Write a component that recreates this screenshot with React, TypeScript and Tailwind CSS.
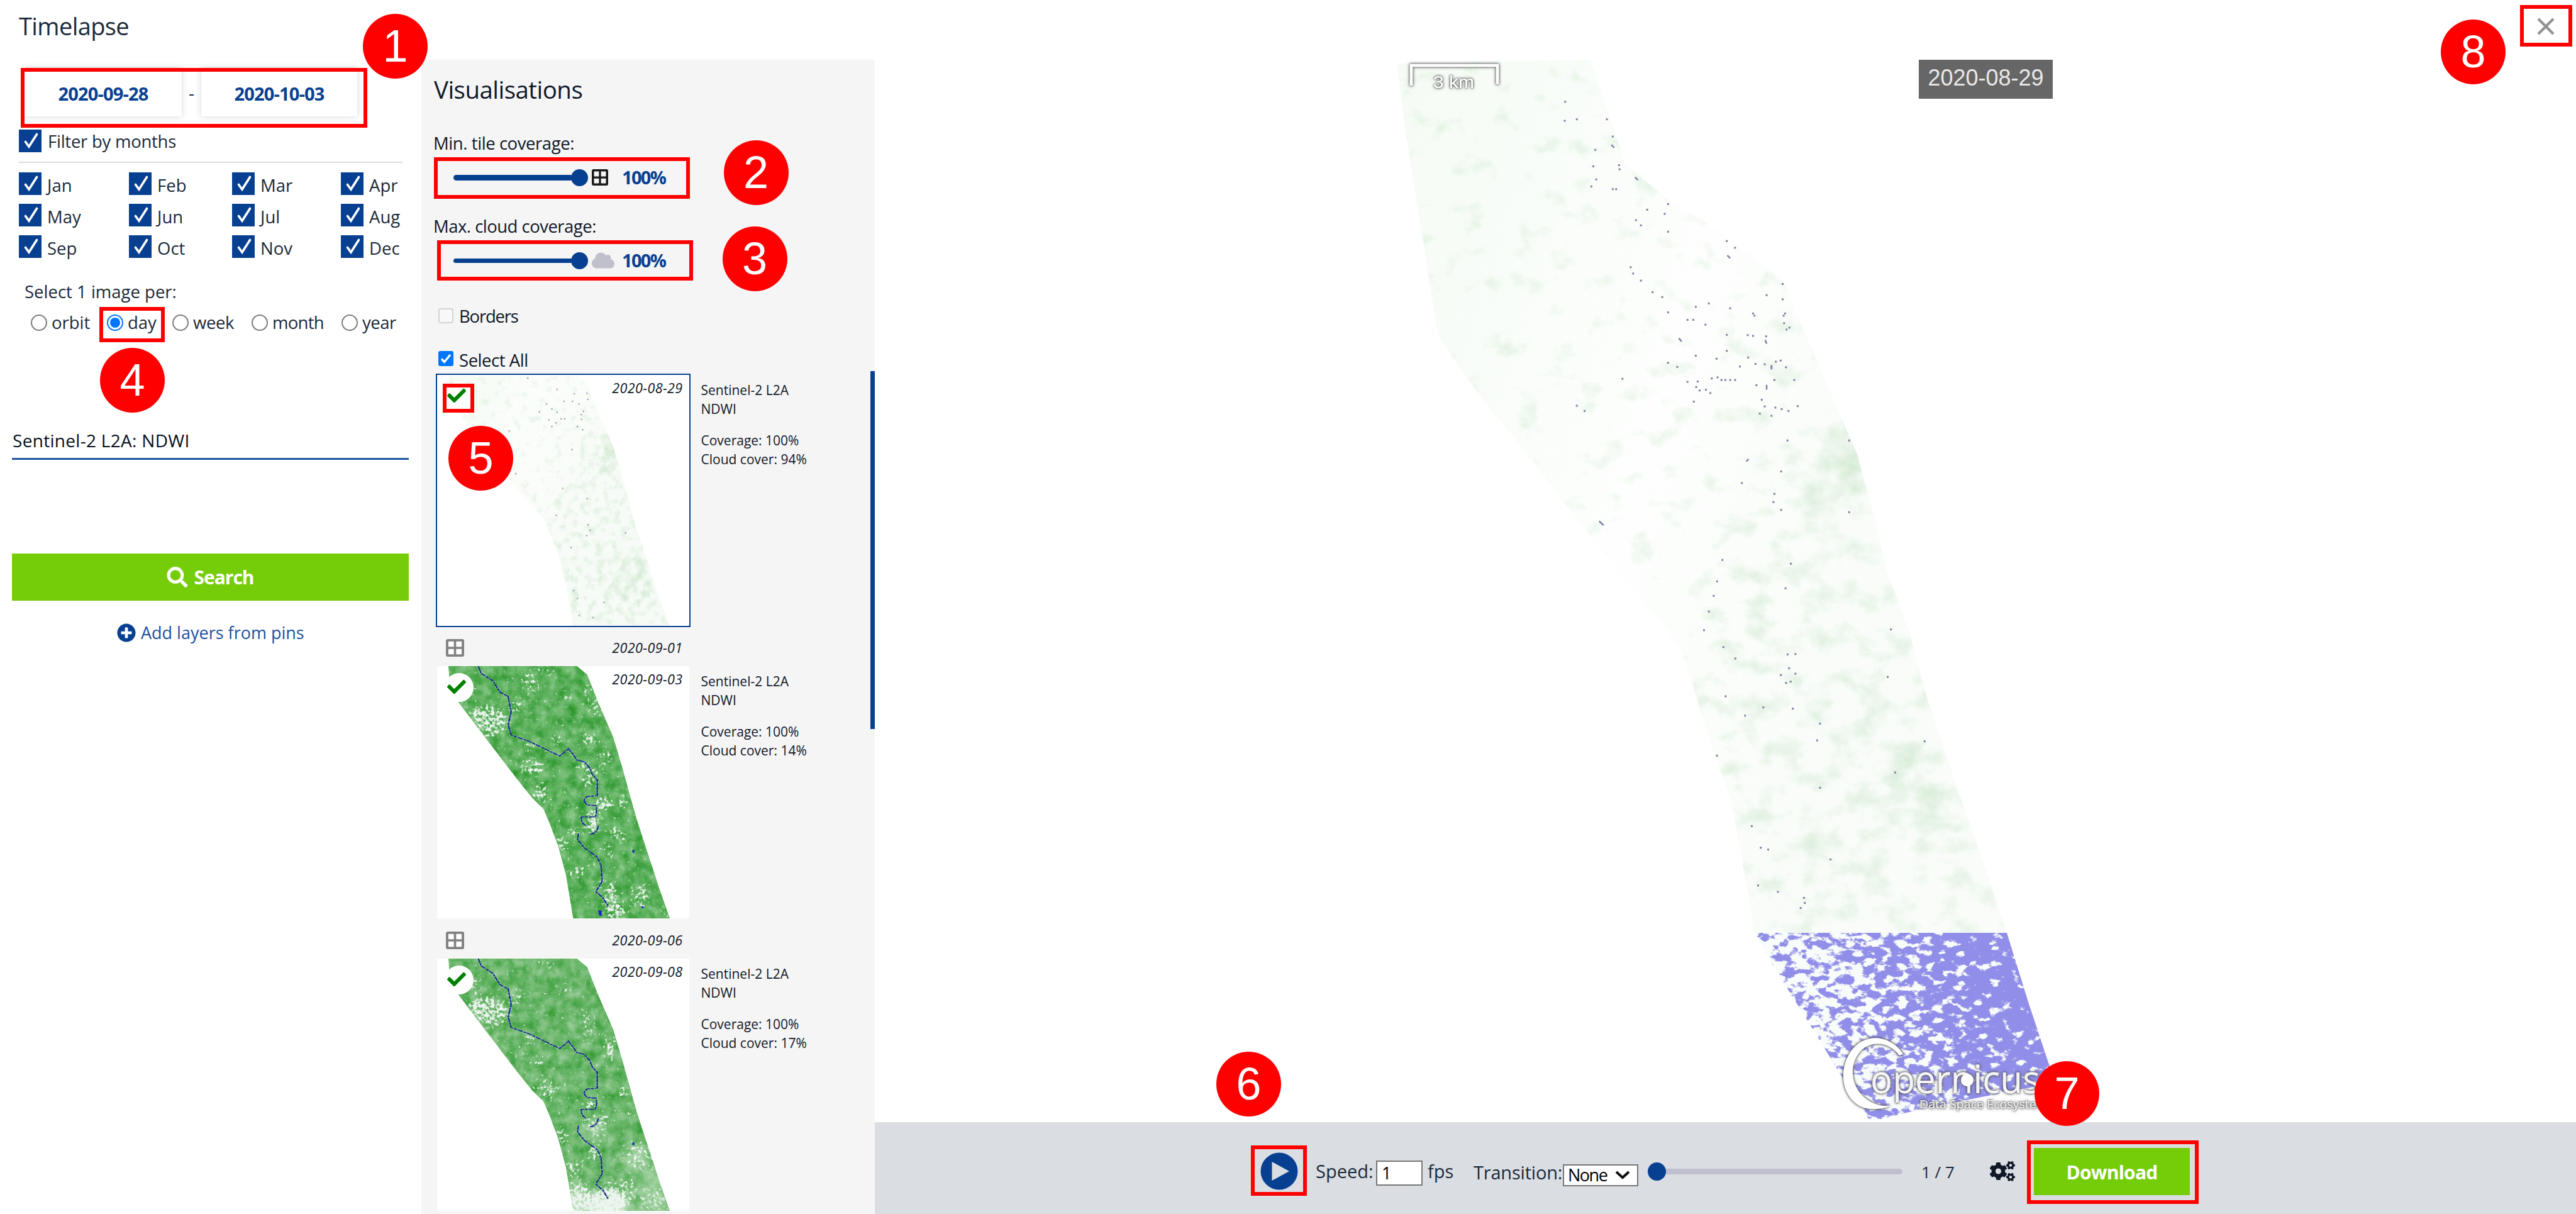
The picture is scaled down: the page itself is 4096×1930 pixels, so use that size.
import React from "react";
import { FaSearch, FaPlusCircle, FaCloud, FaCogs, FaCheck } from "react-icons/fa";

const MONTHS = ["Jan", "Feb", "Mar", "Apr", "May", "Jun", "Jul", "Aug", "Sep", "Oct", "Nov", "Dec"];

/* ---------- annotations ---------- */

function Marker({ n, className }: { n: number; className: string }) {
  return (
    <div
      className={`absolute z-20 flex h-[103px] w-[103px] items-center justify-center rounded-full bg-[#ff0000] font-['Liberation_Sans',sans-serif] text-[72px] leading-[103px] text-white ${className}`}
    >
      {n}
    </div>
  );
}

function Frame({ className }: { className: string }) {
  return <div className={`absolute z-10 border-[6.5px] border-[#ff0000] ${className}`} />;
}

/* ---------- small controls ---------- */

function BlueCheck() {
  return (
    <span className="flex h-9 w-9 shrink-0 items-center justify-center bg-[#084091]">
      <svg viewBox="0 0 36 36" className="h-9 w-9">
        <path d="M10.500 19.500 16 27 28.500 7.500" fill="none" stroke="#fff" strokeWidth="3.600" strokeLinecap="round" />
      </svg>
    </span>
  );
}

function Radio({ label, checked, className }: { label: string; checked?: boolean; className: string }) {
  return (
    <label className={`flex items-center gap-[7px] ${className}`}>
      <span
        className={`flex h-[26px] w-[26px] shrink-0 items-center justify-center rounded-full border-[2px] bg-white ${
          checked ? "border-[#0075ff]" : "border-[#7d7d7d]"
        }`}
      >
        {checked && <span className="h-4 w-4 rounded-full bg-[#0075ff]" />}
      </span>
      {label}
    </label>
  );
}

function TileIcon({ color, className, fill }: { color: string; className: string; fill: string }) {
  return (
    <svg viewBox="0 0 28 28" preserveAspectRatio="none" className={className}>
      <rect x="1.900" y="1.900" width="24.200" height="24.200" rx="1" fill={fill} stroke={color} strokeWidth="3.800" />
      <path d="M14 2v24M2 14h24" stroke={color} strokeWidth="3.500" />
    </svg>
  );
}

function Coverage({ thick, children }: { thick?: boolean; children: React.ReactNode }) {
  return (
    <div className="ml-[30px] flex h-10 items-center">
      <div className="flex w-[214px] items-center">
        <span className={`w-[190px] rounded-full bg-[#084091] ${thick ? "h-[9px]" : "h-[7px]"}`} />
        <span className="-ml-[3px] h-[27px] w-[27px] rounded-full bg-[#084091]" />
      </div>
      <div className="ml-[6px] w-[48px]">{children}</div>
      <span className="text-[29px] font-bold leading-10 tracking-[-1.700px] text-[#084091]">100%</span>
    </div>
  );
}

/* ---------- satellite imagery ---------- */

const STRIP =
  "92,160 535,160 570,200 610,340 660,500 690,640 740,890 780,1060 820,1230 855,1368 522,1368 497,1160 470,1020 440,910 420,845 380,790 325,695 240,540 125,330 97,250";
const RIVER =
  "M195 160 205 195 245 230 270 285 298 305 308 380 298 440 308 490 370 520 430 560 475 590 490 575 505 555 520 580 535 610 560 618 580 650 588 680 605 705 605 780 570 785Q550 800 570 825L600 828Q606 850 598 882L550 882Q548 915 570 925M608 925Q606 962 580 965M540 960 537 990 560 1030 605 1075 618 1115 622 1190 600 1240 625 1270 642 1310";

type Patch = [number, number, number, number, number];

const CLEAR_PATCHES: Patch[] = [
  [235, 425, 62, 72, 0.62], [190, 385, 30, 30, 0.5], [580, 690, 20, 60, 0.6], [628, 820, 28, 34, 0.75], [592, 905, 20, 60, 0.85],
  [690, 815, 18, 40, 0.5], [665, 955, 22, 30, 0.6], [692, 985, 14, 20, 0.65], [640, 1040, 14, 24, 0.6], [410, 770, 26, 44, 0.62],
  [370, 640, 30, 40, 0.5], [405, 650, 20, 34, 0.5], [575, 512, 20, 38, 0.65], [600, 365, 18, 44, 0.6], [655, 1290, 34, 70, 0.58],
  [755, 1260, 30, 60, 0.52], [480, 1010, 22, 36, 0.6], [430, 178, 24, 26, 0.5], [330, 350, 20, 44, 0.5], [528, 955, 18, 20, 0.75],
  [375, 235, 32, 60, 0.45], [472, 510, 18, 44, 0.5], [535, 1150, 24, 34, 0.5], [590, 1100, 14, 18, 0.65], [655, 1210, 18, 20, 0.65],
  [610, 1195, 12, 24, 0.6], [500, 318, 16, 22, 0.5], [550, 630, 20, 22, 0.55], [648, 1078, 10, 14, 0.7], [630, 600, 20, 60, 0.42],
  [575, 280, 16, 50, 0.42], [680, 1350, 40, 34, 0.5], [840, 1340, 14, 40, 0.5], [375, 545, 22, 16, 0.5],
];

const HAZY_PATCHES: Patch[] = [
  [235, 415, 68, 70, 0.62], [190, 385, 34, 34, 0.5], [650, 590, 24, 60, 0.55], [570, 480, 18, 90, 0.42], [692, 800, 16, 26, 0.62],
  [708, 915, 12, 18, 0.65], [630, 920, 14, 24, 0.6], [582, 860, 16, 30, 0.75], [410, 660, 22, 18, 0.55], [348, 610, 12, 34, 0.5],
  [375, 545, 24, 14, 0.6], [430, 178, 24, 26, 0.5], [330, 350, 16, 50, 0.5], [600, 960, 36, 60, 0.46], [600, 1090, 22, 44, 0.66],
  [540, 1310, 40, 80, 0.7], [640, 1330, 70, 70, 0.85], [750, 1110, 60, 70, 0.4], [690, 1270, 60, 60, 0.4], [800, 1330, 50, 80, 0.4],
  [430, 780, 40, 50, 0.42], [480, 1010, 24, 40, 0.5], [520, 1170, 30, 40, 0.48], [490, 318, 14, 22, 0.5], [190, 290, 14, 60, 0.42],
];

function GreenScene({ id, patches, hazy }: { id: string; patches: Patch[]; hazy?: boolean }) {
  return (
    <svg viewBox="53 160 869 1208" preserveAspectRatio="none" className="h-full w-full bg-white">
      <defs>
        <clipPath id={`${id}-clip`}>
          <polygon points={STRIP} />
        </clipPath>
        <filter id={`${id}-field`} filterUnits="userSpaceOnUse" x="53" y="160" width="869" height="1208" colorInterpolationFilters="sRGB">
          <feTurbulence type="fractalNoise" baseFrequency="0.03 0.02" numOctaves="6" seed={hazy ? 8 : 3} />
          <feColorMatrix values={hazy ? "0.5 0 0 0 0.16  0.24 0 0 0 0.59  0.5 0 0 0 0.16  0 0 0 0 1" : "0.5 0 0 0 0.11  0.26 0 0 0 0.56  0.5 0 0 0 0.11  0 0 0 0 1"} />
        </filter>
        <filter id={`${id}-speck`} filterUnits="userSpaceOnUse" x="53" y="160" width="869" height="1208" colorInterpolationFilters="sRGB">
          <feGaussianBlur in="SourceAlpha" stdDeviation="13" result="soft" />
          <feTurbulence type="fractalNoise" baseFrequency="0.1 0.066" numOctaves="4" seed="11" result="n" />
          <feColorMatrix in="n" values="0 0 0 0 0  0 0 0 0 0  0 0 0 0 0  1 0 0 0 0" result="na" />
          <feComposite in="soft" in2="na" operator="arithmetic" k2="0.55" k3="0.8" />
          <feColorMatrix values="0 0 0 0 0.93  0 0 0 0 0.96  0 0 0 0 0.94  0 0 0 6 -4.25" />
        </filter>
        <filter id={`${id}-haze`} x="-30%" y="-30%" width="160%" height="160%">
          <feGaussianBlur stdDeviation="22" />
        </filter>
      </defs>
      <g clipPath={`url(#${id}-clip)`}>
        <rect x="53" y="160" width="869" height="1208" filter={`url(#${id}-field)`} />
        {hazy && (
          <g filter={`url(#${id}-haze)`} fill="#ffffff">
            <ellipse cx="740" cy="1120" rx="40" ry="70" fillOpacity="0.400" />
            <ellipse cx="530" cy="1320" rx="36" ry="80" fillOpacity="0.600" />
            <ellipse cx="640" cy="1345" rx="80" ry="60" fillOpacity="0.750" />
            <ellipse cx="800" cy="1290" rx="50" ry="120" fillOpacity="0.350" />
            <ellipse cx="600" cy="980" rx="30" ry="60" fillOpacity="0.350" />
          </g>
        )}
        <g filter={`url(#${id}-speck)`}>
          <rect x="53" y="160" width="869" height="1208" fillOpacity="0.260" />
          {patches.map(([x, y, rx, ry, o], i) => (
            <ellipse key={i} cx={x} cy={y} rx={rx} ry={ry} fillOpacity={o} />
          ))}
        </g>
        <path d={RIVER} fill="none" stroke="#d6e6dc" strokeWidth="10" strokeOpacity="0.450" strokeDasharray="14 9" />
        <path d={RIVER} fill="none" stroke="#16308c" strokeWidth="5.500" strokeDasharray="20 3 11 2" />
        <path d="M726 1040h7v14h-7z" fill="#1d3b9c" />
        {!hazy && <path d="M607 1330h13v26h-8zM757 1310h8v8h-8z" fill="#1a24c4" />}
      </g>
    </svg>
  );
}

function PaleFilters() {
  return (
    <>
      <filter id="pale-a" filterUnits="userSpaceOnUse" x="2200" y="80" width="1100" height="1720" colorInterpolationFilters="sRGB">
        <feGaussianBlur in="SourceAlpha" stdDeviation="18" result="soft" />
        <feTurbulence type="fractalNoise" baseFrequency="0.022 0.028" numOctaves="6" seed="5" result="n" />
        <feColorMatrix in="n" values="0 0 0 0 0  0 0 0 0 0  0 0 0 0 0  1 0 0 0 0" result="na" />
        <feComposite in="soft" in2="na" operator="arithmetic" k2="0.6" k3="0.6" />
        <feColorMatrix values="0 0 0 0 0.58  0 0 0 0 0.8  0 0 0 0 0.58  0 0 0 1.050 -0.370" />
      </filter>
      <filter id="blue-a" filterUnits="userSpaceOnUse" x="2700" y="1460" width="600" height="340" colorInterpolationFilters="sRGB">
        <feTurbulence type="fractalNoise" baseFrequency="0.055 0.085" numOctaves="5" seed="21" result="n" />
        <feColorMatrix in="n" values="0 0 0 0 0  0 0 0 0 0  0 0 0 0 0  1 0 0 0 0" result="na" />
        <feComposite in="SourceAlpha" in2="na" operator="arithmetic" k2="0.5" k3="0.5" />
        <feColorMatrix values="0 0 0 0 0.565  0 0 0 0 0.555  0 0 0 0 0.91  0 0 0 20 -9.500" />
      </filter>
    </>
  );
}

const MAIN_STRIP =
  "2221,101 2405,97 2529,95 2560,187 2583,258 2652,318 2737,368 2837,448 2891,579 2953,722 2976,805 3000,906 3036,1005 3066,1116 3119,1273 3155,1374 3191,1484 2790,1484 2763,1328 2751,1268 2718,1177 2692,1091 2671,1030 2652,1005 2482,793 2413,704 2351,627 2287,535 2235,211";
const OCEAN = "2790,1483 3191,1483 3226,1596 3263,1707 3263,1722 3060,1762 2974,1783 2929,1712 2870,1616 2819,1535";

const DOTS: [number, number][] = [
  [378, 147], [377, 198], [402, 194], [464, 194], [476, 240], [440, 276], [436, 320], [442, 355], [432, 374], [489, 317], [490, 328],
  [476, 381], [483, 381], [590, 421], [547, 436], [583, 447], [524, 464], [534, 478], [590, 495], [711, 520], [728, 538], [513, 590],
  [518, 607], [534, 626], [558, 657], [578, 670], [674, 687], [647, 696], [718, 700], [590, 711], [630, 731], [642, 731], [667, 744],
  [765, 714], [768, 720], [828, 720], [831, 714], [826, 635], [826, 676], [793, 665], [840, 752], [834, 757], [754, 772], [765, 774],
  [792, 775], [711, 771], [711, 814], [647, 827], [690, 835], [755, 832], [770, 849], [789, 850], [738, 856], [609, 857], [590, 846],
  [496, 889], [680, 888], [692, 885], [700, 892], [708, 892], [718, 892], [728, 892], [651, 896], [630, 897], [648, 911], [655, 920],
  [668, 918], [677, 927], [809, 892], [850, 892], [803, 858], [772, 906], [643, 950], [783, 945], [402, 961], [418, 975], [811, 966],
  [824, 970], [838, 975], [857, 962], [779, 982], [789, 963], [803, 988], [829, 740], [823, 1137], [742, 1168], [809, 1197], [807, 1219],
  [823, 1240], [836, 1054], [963, 1246], [963, 1054], [843, 1384], [702, 1374], [691, 1431], [684, 1470], [674, 1512], [664, 1562],
  [832, 1450], [822, 840], [812, 843], [833, 858], [1049, 1560],
];
const LOWER_DOTS: [number, number][] = [
  [382, 46], [414, 82], [554, 69], [575, 68], [558, 113], [536, 134], [575, 130], [550, 159], [562, 155], [822, 140], [489, 236],
  [440, 262], [568, 240], [641, 287], [633, 340], [921, 343], [842, 441], [641, 489], [458, 610], [482, 678], [502, 684], [669, 715],
  [475, 797], [528, 817], [598, 836], [600, 852], [589, 868], [365, 388], [388, 201],
];
const STREAKS: [number, number, number, number][] = [
  [473, 262, 479, 270], [522, 349, 528, 357], [712, 558, 718, 566], [612, 780, 618, 789], [790, 785, 793, 795], [793, 905, 793, 918],
  [803, 852, 803, 864], [448, 1270, 457, 1281], [751, 1110, 756, 1104],
];

function MainScene() {
  return (
    <svg viewBox="1391 0 2705 1784" className="h-full w-full">
      <defs>
        <PaleFilters />
        <clipPath id="main-clip">
          <polygon points={MAIN_STRIP} />
        </clipPath>
        <clipPath id="ocean-clip">
          <polygon points={OCEAN} />
        </clipPath>
        <linearGradient id="ocean-cover" x1="0" y1="0.450" x2="1" y2="0.200">
          <stop offset="0" stopOpacity="0.360" />
          <stop offset="0.300" stopOpacity="0.450" />
          <stop offset="0.550" stopOpacity="0.550" />
          <stop offset="0.850" stopOpacity="0.680" />
        </linearGradient>
        <linearGradient id="pale-fill" x1="0" y1="0" x2="1" y2="0.400">
          <stop offset="0" stopColor="#f5fbf4" />
          <stop offset="0.320" stopColor="#fafdfa" />
          <stop offset="0.480" stopColor="#fdfefd" />
          <stop offset="0.800" stopColor="#f9fcf9" />
        </linearGradient>
        <filter id="logo-shadow" x="-20%" y="-20%" width="140%" height="140%">
          <feDropShadow dx="0" dy="0" stdDeviation="1.600" floodColor="#444" floodOpacity="1" />
          <feDropShadow dx="0" dy="0" stdDeviation="2.200" floodColor="#555" floodOpacity="0.800" />
        </filter>
      </defs>

      <g clipPath="url(#main-clip)">
        <rect x="2200" y="80" width="1100" height="1420" fill="url(#pale-fill)" />
        <g filter="url(#pale-a)">
          <polygon points="2690,980 2780,780 2900,640 3000,900 3191,1484 2790,1484" fillOpacity="0.120" />
          <ellipse cx="2935" cy="735" rx="38" ry="85" fillOpacity="0.300" />
          <ellipse cx="2955" cy="742" rx="16" ry="34" fillOpacity="0.550" />
          <ellipse cx="2835" cy="585" rx="34" ry="20" fillOpacity="0.300" />
          <ellipse cx="3050" cy="1235" rx="24" ry="60" transform="rotate(-22 3050 1235)" fillOpacity="0.300" />
          <ellipse cx="2985" cy="1300" rx="24" ry="80" transform="rotate(-15 2985 1300)" fillOpacity="0.150" />
          <ellipse cx="3090" cy="1300" rx="20" ry="60" fillOpacity="0.100" />
        </g>
      </g>
      <g fill="#7f83a0">
        {DOTS.map(([x, y], i) => (
          <rect key={i} x={2195.5 + x * 0.7718} y={73 + y * 0.5937} width="3" height="3" />
        ))}
        {LOWER_DOTS.map(([x, y], i) => (
          <rect key={i} x={2512 + x * 0.5937} y={1004 + y * 0.5047} width="3" height="3" />
        ))}
      </g>
      {STREAKS.map(([a, b, c, d], i) => (
        <line key={i} x1={2197 + a * 0.7718} y1={74.5 + b * 0.5937} x2={2197 + c * 0.7718} y2={74.5 + d * 0.5937} stroke="#7f83a0" strokeWidth="2.500" />
      ))}

      <g clipPath="url(#ocean-clip)">
        <polygon points={OCEAN} fill="#f8fcfa" />
        <rect x="2700" y="1460" width="600" height="340" fill="url(#ocean-cover)" filter="url(#blue-a)" />
      </g>

      <g filter="url(#logo-shadow)">
        <path d="M2244 136V104H2381V134" fill="none" stroke="#fff" strokeWidth="4.500" />
        <text x="2279" y="140" textLength="65" lengthAdjust="spacingAndGlyphs" fill="#fff" className="font-['Liberation_Sans',sans-serif] text-[28px]">
          3 km
        </text>
      </g>

      <g filter="url(#logo-shadow)">
        <path
          d="M3026 1676C3008 1646 2966 1640 2944 1670 2916 1710 2936 1762 2976 1763 2990 1763 2998 1762 3006 1758 2966 1762 2934 1722 2950 1684 2964 1652 3002 1652 3020 1678Z"
          fill="#fff"
        />
        <text x="2974" y="1738" textLength="270" lengthAdjust="spacingAndGlyphs" fill="#f4f4f6" className="font-['Open_Sans',sans-serif] text-[62px]">
          opernicus
        </text>
        <circle cx="3128" cy="1717" r="10" fill="#fff" />
        <text x="3052" y="1762" textLength="204" lengthAdjust="spacingAndGlyphs" fill="#f2f2f4" className="font-['Open_Sans',sans-serif] text-[19px]">
          Data Space Ecosystem
        </text>
      </g>
    </svg>
  );
}

const THUMB_DOTS: [number, number][] = [
  [365, 183], [466, 237], [525, 258], [569, 256], [572, 285], [519, 294], [490, 294], [541, 307], [430, 307], [448, 331], [466, 347],
  [405, 345], [557, 342], [550, 380], [549, 358], [480, 378], [492, 378], [438, 383], [462, 397], [448, 415], [536, 415], [554, 430],
  [301, 436], [517, 525], [324, 641], [485, 711], [569, 760], [463, 840], [702, 924], [568, 937], [580, 912], [573, 885], [514, 995],
  [536, 1238], [628, 1257], [523, 1200], [542, 1320], [590, 1330],
];

function PaleScene() {
  return (
    <svg viewBox="53 168 869 1202" preserveAspectRatio="none" className="h-full w-full bg-white">
      <defs>
        <clipPath id="thumb-clip">
          <polygon points={STRIP} transform="translate(0 12)" />
        </clipPath>
        <linearGradient id="thumb-fill" x1="0" y1="0" x2="1" y2="0.400">
          <stop offset="0" stopColor="#f3faf2" />
          <stop offset="0.350" stopColor="#fbfdfb" />
          <stop offset="0.800" stopColor="#f7fbf7" />
        </linearGradient>
        <filter id="thumb-haze" filterUnits="userSpaceOnUse" x="53" y="160" width="869" height="1220" colorInterpolationFilters="sRGB">
          <feGaussianBlur in="SourceAlpha" stdDeviation="22" result="soft" />
          <feTurbulence type="fractalNoise" baseFrequency="0.035 0.025" numOctaves="6" seed="9" result="n" />
          <feColorMatrix in="n" values="0 0 0 0 0  0 0 0 0 0  0 0 0 0 0  1 0 0 0 0" result="na" />
          <feComposite in="soft" in2="na" operator="arithmetic" k2="0.6" k3="0.6" />
          <feColorMatrix values="0 0 0 0 0.58  0 0 0 0 0.8  0 0 0 0 0.58  0 0 0 1.100 -0.380" />
        </filter>
      </defs>
      <g clipPath="url(#thumb-clip)">
        <rect x="53" y="160" width="869" height="1210" fill="url(#thumb-fill)" />
        <g filter="url(#thumb-haze)">
          <polygon points="430,840 500,680 560,500 640,500 740,890 855,1370 522,1370" fillOpacity="0.120" />
          <ellipse cx="645" cy="540" rx="34" ry="100" fillOpacity="0.420" />
          <ellipse cx="560" cy="340" rx="20" ry="30" fillOpacity="0.250" />
          <ellipse cx="750" cy="1120" rx="34" ry="120" transform="rotate(-12 750 1120)" fillOpacity="0.280" />
          <ellipse cx="690" cy="1200" rx="40" ry="120" transform="rotate(-12 690 1200)" fillOpacity="0.150" />
        </g>
      </g>
      {THUMB_DOTS.map(([x, y], i) => (
        <rect key={i} x={x - 2} y={y - 3} width="5" height="7" fill="#8c90a6" fillOpacity="0.800" />
      ))}
    </svg>
  );
}

/* ---------- result list ---------- */

function ResultCard({ date, cloud, selected, children }: { date: string; cloud: string; selected?: boolean; children: React.ReactNode }) {
  return (
    <div className="flex">
      <div className={`relative w-[405px] shrink-0 border-2 ${selected ? "h-[403px] border-[#084091]" : "h-[405px] border-transparent"}`}>
        {children}
        <span className="absolute left-[12px] top-[11px] flex h-[46px] w-[46px] items-center justify-center rounded-full bg-white" />
        <FaCheck className="absolute left-[16px] top-[18px] h-[30px] w-[30px] text-[#008000]" />
        <span className="absolute right-[10px] top-[6px] text-[21.500px] italic leading-[30px] tracking-[0.400px]">{date}</span>
      </div>
      <div className="ml-[17px] pt-[12px] text-[21px] leading-[29.500px]">
        <p>Sentinel-2 L2A</p>
        <p>NDWI</p>
        <p className="mt-[21px]">Coverage: 100%</p>
        <p>Cloud cover: {cloud}</p>
      </div>
    </div>
  );
}

function EmptyRow({ date }: { date: string }) {
  return (
    <div className="flex h-[60px] w-[405px] items-center justify-between pl-[16px] pr-3 pt-[6px]">
      <TileIcon color="#828282" fill="#ffffff" className="h-[28px] w-[29px]" />
      <span className="-mt-[1px] text-[21.500px] italic leading-[30px] tracking-[0.400px]">{date}</span>
    </div>
  );
}

/* ---------- panels ---------- */

function Sidebar() {
  return (
    <aside className="flex h-full w-[670px] shrink-0 flex-col text-[27.500px] text-[#1b2a3a]">
      <h1 className="ml-[30px] text-[38px] leading-[83px] tracking-[-0.600px]">Timelapse</h1>

      <div className="ml-[39px] mt-[25px] flex h-[77px] items-stretch text-[29px] font-bold text-[#084091]">
        <div className="flex w-[250px] items-center justify-center bg-white pt-1 tracking-[-0.840px] shadow-[0_0_10px_rgba(0,0,0,0.16)]">2020-09-28</div>
        <div className="flex w-[31px] items-center justify-center text-[28px] font-normal text-[#1b2a3a]">-</div>
        <div className="flex w-[248px] items-center justify-center bg-white pt-1 tracking-[-0.840px] shadow-[0_0_10px_rgba(0,0,0,0.16)]">2020-10-03</div>
      </div>

      <label className="ml-[30px] mt-[21px] flex h-9 items-center gap-[10px] tracking-[-0.250px]">
        <BlueCheck />
        <span className="mt-[2px]">Filter by months</span>
      </label>
      <div className="ml-[30px] mt-[15px] h-[2px] w-[610px] bg-[#d8dce2]" />

      <div className="ml-[30px] mt-[15px] grid grid-cols-[175px_164px_173px_98px] gap-y-[14px]">
        {MONTHS.map((m) => (
          <label key={m} className="flex h-9 items-center gap-[9px]">
            <BlueCheck />
            <span className="mt-[6px] leading-9">{m}</span>
          </label>
        ))}
      </div>

      <p className="ml-[39px] mt-[34px] leading-10">Select 1 image per:</p>
      <div className="ml-[49px] mt-2 flex h-[41px]">
        <Radio label="orbit" className="w-[121px]" />
        <Radio label="day" checked className="w-[104px]" />
        <Radio label="week" className="w-[126px] tracking-[-0.400px]" />
        <Radio label="month" className="w-[143px] tracking-[-0.700px]" />
        <Radio label="year" className="w-[100px] tracking-[-0.500px]" />
      </div>

      <h2 className="ml-[20px] mt-[147px] text-[28px] font-medium leading-10 tracking-[0.300px] text-[#06101e]">Sentinel-2 L2A: NDWI</h2>
      <div className="ml-[19px] mt-2 h-[3px] w-[631px] bg-[#1c54a0]" />

      <button className="ml-[19px] mt-[149px] flex h-[75px] w-[631px] items-center justify-center gap-[9px] bg-[#75cc09] text-[30px] font-bold tracking-[-1px] text-white">
        <FaSearch className="h-[33px] w-[34px]" />
        Search
      </button>
      <button className="ml-[186px] mt-[31px] flex h-10 items-center gap-[8px] text-[27px] text-[#1d50a0]">
        <FaPlusCircle className="h-[30px] w-[30px] text-[#084091]" />
        Add layers from pins
      </button>
    </aside>
  );
}

function Visualisations() {
  return (
    <section className="relative mt-[95px] flex w-[721px] shrink-0 flex-col bg-[#f5f5f5] pl-[21px] text-[27.500px] text-[#101828]">
      <h2 className="-ml-px mt-[17px] text-[38.500px] leading-[60px] tracking-[-0.540px]">Visualisations</h2>

      <p className="-ml-[2px] mt-[38px] leading-9 tracking-[-0.430px]">Min. tile coverage:</p>
      <div className="mt-[16px]">
        <Coverage thick>
          <TileIcon color="#1a1a1a" fill="#f5f5f5" className="h-[26px] w-[26px]" />
        </Coverage>
      </div>

      <p className="-ml-[2px] mt-[40px] leading-9 tracking-[-0.520px]">Max. cloud coverage:</p>
      <div className="mt-[16px]">
        <Coverage>
          <FaCloud className="h-[36px] w-[36px] text-[#c0c0cc]" />
        </Coverage>
      </div>

      <label className="ml-[6px] mt-[50px] flex h-9 items-center gap-[9px] tracking-[-1.200px]">
        <span className="h-6 w-6 rounded-[4px] border-2 border-[#d4d4d4] bg-[#f8f8f8]" />
        <span className="mt-[2px]">Borders</span>
      </label>
      <label className="ml-[6px] mt-8 flex h-9 items-center gap-[9px] tracking-[-0.450px]">
        <span className="flex h-6 w-6 items-center justify-center rounded-[3px] bg-[#0075ff]">
          <svg viewBox="0 0 24 24" className="h-6 w-6">
            <path d="M5 12.500 9.500 17.500 19 6" fill="none" stroke="#fff" strokeWidth="3.400" />
          </svg>
        </span>
        <span className="mt-[6px]">Select All</span>
      </label>

      <div className="ml-[1.500px] mt-[6px] flex flex-col">
        <ResultCard date="2020-08-29" cloud="94%" selected>
          <PaleScene />
        </ResultCard>
        <EmptyRow date="2020-09-01" />
        <ResultCard date="2020-09-03" cloud="14%">
          <GreenScene id="sep03" patches={CLEAR_PATCHES} />
        </ResultCard>
        <EmptyRow date="2020-09-06" />
        <ResultCard date="2020-09-08" cloud="17%">
          <GreenScene id="sep08" patches={HAZY_PATCHES} hazy />
        </ResultCard>
      </div>

      <div className="absolute right-0 top-[495px] h-[569px] w-[7px] bg-[#084091]" />
    </section>
  );
}

function PlayerBar() {
  return (
    <footer className="flex h-[146px] shrink-0 items-center bg-[#dadee3] pt-[10px] text-[29px] text-[#1b2a3a]">
      <svg viewBox="0 0 60 60" className="ml-[613px] h-[60px] w-[60px]">
        <circle cx="30" cy="30" r="29.500" fill="#084091" />
        <path d="M18.500 15 46 30 18.500 45Z" fill="#dadee3" />
      </svg>
      <span className="ml-[28px] w-[96px]">Speed:</span>
      <span className="mt-[6px] flex h-[40px] w-[74px] items-center border-2 border-[#767676] bg-white pl-[7px] text-[27px] text-black">1</span>
      <span className="ml-2 w-[41px]">fps</span>
      <span className="ml-8 mt-1 w-[142px] tracking-[-0.200px]">Transition:</span>
      <span className="mt-3 flex h-[35px] w-[120px] items-center justify-between border-2 border-[#767676] bg-white pl-[6px] pr-[11px] text-[27px] leading-[30px] tracking-[-1.500px] text-black">
        None
        <svg viewBox="0 0 24 14" className="h-[14px] w-6">
          <path d="M2 2 12 11 22 2" fill="none" stroke="#111" strokeWidth="4" />
        </svg>
      </span>
      <div className="ml-[15px] flex w-[405px] items-center">
        <span className="h-[29px] w-[29px] shrink-0 rounded-full bg-[#084091]" />
        <span className="h-[9px] flex-1 rounded-r-full bg-[#bfbfcd]" />
      </div>
      <span className="ml-[30px] mt-[2px] w-[55px] whitespace-nowrap text-[26px]">1 / 7</span>
      <FaCogs className="ml-[54px] h-[40px] w-[40px] text-[#101828]" />
      <button className="ml-[30px] h-[75px] w-[248px] bg-[#75cc09] pt-[3px] text-[30px] font-bold tracking-[-0.750px] text-white">Download</button>
    </footer>
  );
}

export default function App() {
  return (
    <div className="relative flex h-[1930px] w-[4096px] overflow-hidden bg-white font-['Open_Sans',sans-serif]">
      <Sidebar />
      <Visualisations />
      <main className="relative flex w-[2705px] flex-col">
        <div className="h-[1784px]">
          <MainScene />
        </div>
        <span className="absolute left-[1660px] top-[95px] flex h-[62px] w-[213px] items-center justify-center bg-[#666666] pb-1 font-['Liberation_Sans',sans-serif] text-[36px] text-[#e8e8e8]">
          2020-08-29
        </span>
        <svg viewBox="0 0 28 28" className="absolute right-[34px] top-[28px] h-7 w-7">
          <path d="M2 2 26 26M26 2 2 26" stroke="#919191" strokeWidth="4.200" />
        </svg>
        <PlayerBar />
      </main>

      <Frame className="left-[32.500px] top-[108px] h-[95px] w-[551.500px]" />
      <Frame className="left-[158px] top-[488px] h-[56px] w-[104px]" />
      <Frame className="left-[690px] top-[250px] h-[65.500px] w-[407px]" />
      <Frame className="left-[695px] top-[381.500px] h-[64.500px] w-[406.500px]" />
      <Frame className="left-[703.500px] top-[609.500px] h-[46px] w-[50px]" />
      <Frame className="left-[1989px] top-[1821px] h-[80px] w-[89px]" />
      <Frame className="left-[3222.500px] top-[1812.500px] h-[101.500px] w-[273px]" />
      <Frame className="left-[4007px] top-[8px] h-[66px] w-[83px]" />

      <Marker n={1} className="left-[577px] top-[22px]" />
      <Marker n={2} className="left-[1150.500px] top-[222.500px]" />
      <Marker n={3} className="left-[1148.500px] top-[360px]" />
      <Marker n={4} className="left-[159px] top-[553px]" />
      <Marker n={5} className="left-[713px] top-[676.500px]" />
      <Marker n={6} className="left-[1934px] top-[1671.500px]" />
      <Marker n={7} className="left-[3235px] top-[1686.500px]" />
      <Marker n={8} className="left-[3881px] top-[31px]" />
    </div>
  );
}
